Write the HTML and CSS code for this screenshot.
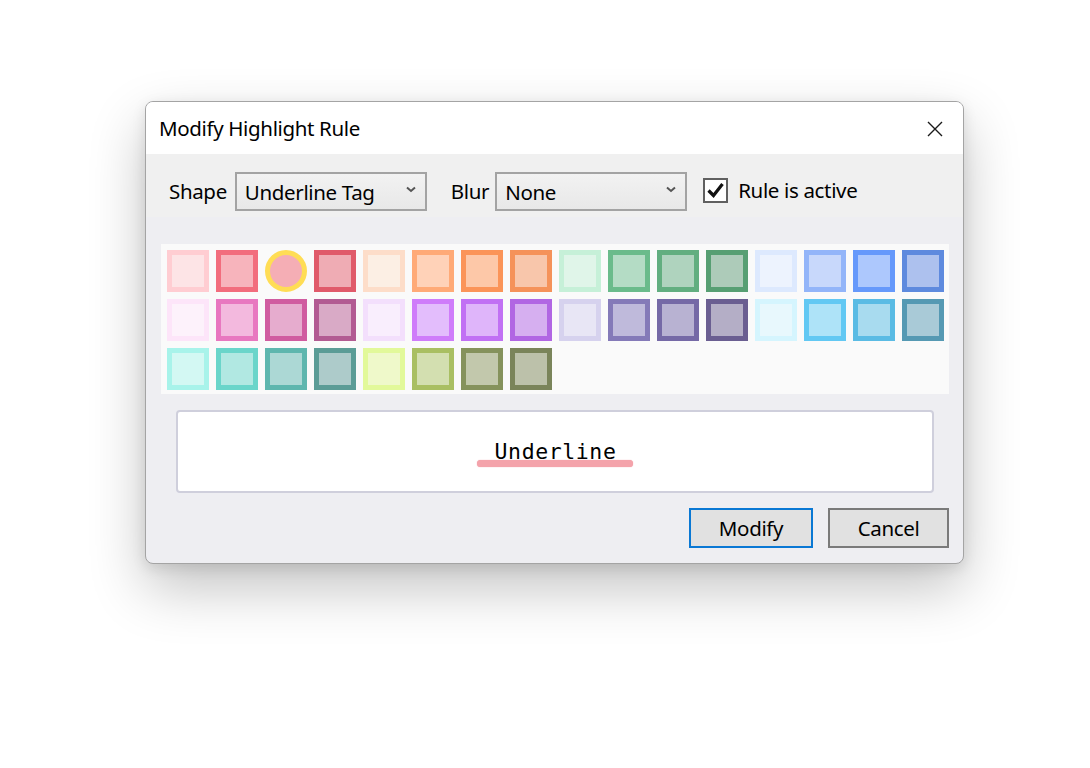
FILE: index.html
```html
<!DOCTYPE html>
<html>
<head>
<meta charset="utf-8">
<link rel="stylesheet" href="styles.css">
</head>
<body>
<div class="stage">
  <div class="dialog">
    <div class="titlebar">
      <span class="title">Modify Highlight Rule</span>
      <svg class="close" width="16" height="16" viewBox="0 0 16 16"><path d="M1 1L15 15M15 1L1 15" stroke="#1a1a1a" stroke-width="1.4" fill="none"/></svg>
    </div>
    <div class="controls">
      <span class="label">Shape</span>
      <div class="select">
        <span>Underline Tag</span>
        <svg class="chev" width="10" height="7" viewBox="0 0 10 7"><path d="M1 1.5L5 5L9 1.5" stroke="#555" stroke-width="2" fill="none"/></svg>
      </div>
      <span class="label blur">Blur</span>
      <div class="select">
        <span>None</span>
        <svg class="chev" width="10" height="7" viewBox="0 0 10 7"><path d="M1 1.5L5 5L9 1.5" stroke="#555" stroke-width="2" fill="none"/></svg>
      </div>
      <div class="check">
        <span class="box"><svg width="21" height="21" viewBox="0 0 21 21"><path d="M3.5 10.5L8.5 15.5L17.5 4" stroke="#111" stroke-width="3.2" fill="none"/></svg></span>
        <span class="label">Rule is active</span>
      </div>
    </div>
    <div class="content">
      <div class="palette">
        <span class="sw" style="--b:#ffcdd2;--f:#fde4e6"></span>
        <span class="sw" style="--b:#f26d7d;--f:#f7b4bc"></span>
        <span class="sw sel" style="--b:#ffdd55;--f:#f5aeb5"></span>
        <span class="sw" style="--b:#e05a6a;--f:#efacb4"></span>
        <span class="sw" style="--b:#fdddc9;--f:#fcefe4"></span>
        <span class="sw" style="--b:#ffaa77;--f:#ffd2b8"></span>
        <span class="sw" style="--b:#fb9458;--f:#fdc8a8"></span>
        <span class="sw" style="--b:#f5925a;--f:#f8c6ab"></span>
        <span class="sw" style="--b:#c6f0d8;--f:#e0f5e9"></span>
        <span class="sw" style="--b:#6abb8b;--f:#b4dcc5"></span>
        <span class="sw" style="--b:#62ae80;--f:#afd3be"></span>
        <span class="sw" style="--b:#579f73;--f:#adcbb9"></span>
        <span class="sw" style="--b:#dde9fe;--f:#edf3fe"></span>
        <span class="sw" style="--b:#93b5f9;--f:#c8d8fb"></span>
        <span class="sw" style="--b:#6699fb;--f:#adc8fd"></span>
        <span class="sw" style="--b:#5e8ade;--f:#adc1ee"></span>

        <span class="sw" style="--b:#fde5f9;--f:#fdf2fb"></span>
        <span class="sw" style="--b:#e878c0;--f:#f3b9de"></span>
        <span class="sw" style="--b:#d05ca0;--f:#e6acce"></span>
        <span class="sw" style="--b:#b25b92;--f:#d9aac6"></span>
        <span class="sw" style="--b:#f3dffc;--f:#f9eefd"></span>
        <span class="sw" style="--b:#cf7cfa;--f:#e3bdfc"></span>
        <span class="sw" style="--b:#c170f4;--f:#dfb5fa"></span>
        <span class="sw" style="--b:#b166e3;--f:#d6aff0"></span>
        <span class="sw" style="--b:#d6d2ee;--f:#e8e6f5"></span>
        <span class="sw" style="--b:#847ab8;--f:#bfbadb"></span>
        <span class="sw" style="--b:#7569a6;--f:#b8b2d2"></span>
        <span class="sw" style="--b:#6a5e91;--f:#b4aec6"></span>
        <span class="sw" style="--b:#d5f5fe;--f:#e8f8fd"></span>
        <span class="sw" style="--b:#62c8f3;--f:#aee3f8"></span>
        <span class="sw" style="--b:#5abbe4;--f:#a8dbef"></span>
        <span class="sw" style="--b:#5599b3;--f:#a9cad7"></span>

        <span class="sw" style="--b:#a8f3ea;--f:#d3f8f3"></span>
        <span class="sw" style="--b:#6ad5ca;--f:#b1e8e2"></span>
        <span class="sw" style="--b:#5eb6ae;--f:#acd8d5"></span>
        <span class="sw" style="--b:#5b9c96;--f:#adcbca"></span>
        <span class="sw" style="--b:#e2f99a;--f:#eff9ca"></span>
        <span class="sw" style="--b:#a9bf62;--f:#d3dfb0"></span>
        <span class="sw" style="--b:#85925c;--f:#c2c8ac"></span>
        <span class="sw" style="--b:#7a845a;--f:#bcc1aa"></span>
      </div>
      <div class="preview">
        <span class="tag">Underline</span>
      </div>
      <div class="buttons">
        <button class="btn primary">Modify</button>
        <button class="btn">Cancel</button>
      </div>
    </div>
  </div>
</div>
</body>
</html>
```

FILE: styles.css
```css
* { box-sizing: border-box; }
html, body { margin: 0; padding: 0; background: #ffffff; }
body {
  font-family: "Noto Sans", "Open Sans", sans-serif;
  color: #000;
}
.stage {
  padding: 101px 0 0 145px;
  height: 768px;
}
.dialog {
  width: 819px;
  border: 1px solid #a4a4a4;
  border-radius: 8px;
  background: #eeeef2;
  overflow: hidden;
  box-shadow: 0 24px 56px rgba(0,0,0,0.24), 0 4px 14px rgba(0,0,0,0.10);
}
.titlebar {
  height: 52px;
  background: #ffffff;
  display: flex;
  align-items: center;
  justify-content: space-between;
  padding: 0 20px 0 13px;
}
.title {
  font-size: 20.5px;
  letter-spacing: -0.35px;
}
.close { display: block; margin-top: 1px; }
.controls {
  height: 63px;
  background: #f0f0f0;
  display: flex;
  align-items: flex-start;
  padding: 18px 0 0 23px;
}
.label {
  font-size: 20.5px;
  letter-spacing: -0.35px;
  line-height: 39px;
  margin-right: 8px;
}
.label.blur { margin-left: 24px; margin-right: 6px; }
.select {
  width: 192px;
  height: 39px;
  border: 2px solid #a3a3a3;
  background: linear-gradient(#f2f2f2, #e8e8e8);
  display: flex;
  align-items: center;
  justify-content: space-between;
  padding: 0 9px 0 8px;
  font-size: 20.5px;
  letter-spacing: -0.35px;
}
.chev { display: block; margin-top: -5px; }
.check {
  display: flex;
  align-items: center;
  margin-left: 16px;
  height: 39px;
}
.box {
  width: 25px;
  height: 25px;
  border: 2px solid #606060;
  background: #fff;
  display: flex;
  align-items: center;
  justify-content: center;
  margin-right: 10px;
  margin-top: -3px;
}
.box svg { display: block; }
.check .label { margin-right: 0; margin-top: -3px; }
.content {
  padding: 27px 14px 15px 15px;
}
.palette {
  background: #fafafa;
  height: 150px;
  padding: 6px 5px 4px 6px;
  display: grid;
  grid-template-columns: repeat(16, 42px);
  grid-auto-rows: 42px;
  gap: 7px;
  align-content: start;
}
.sw {
  display: block;
  width: 42px;
  height: 42px;
  border: 5px solid var(--b);
  background: var(--f);
}
.sw.sel { border-radius: 50%; }
.preview {
  margin: 16px 15px 0 15px;
  height: 83px;
  background: #ffffff;
  border: 2px solid #cfcfdc;
  border-radius: 4px;
  display: flex;
  align-items: center;
  justify-content: center;
}
.tag {
  position: relative;
  font-family: "DejaVu Sans Mono", monospace;
  font-size: 21.5px;
  letter-spacing: 0.6px;
  padding: 0 17px 0 18px;
  line-height: 30px;
  margin-top: 0px;
}
.tag::after {
  content: "";
  position: absolute;
  left: 0;
  right: 0;
  bottom: 0px;
  height: 7px;
  border-radius: 4px;
  background: #f4a3ab;
  box-shadow: 0 0 1px #ef8f99;
}
.buttons {
  display: flex;
  justify-content: flex-end;
  gap: 15px;
  margin-top: 15px;
}
.btn {
  font-family: "Noto Sans", "Open Sans", sans-serif;
  font-size: 20.5px;
  letter-spacing: -0.35px;
  height: 40px;
  background: #e1e1e1;
  border: 2px solid #7a7a7a;
  color: #000;
  padding: 0;
  width: 121px;
}
.btn.primary {
  border-color: #0a78d4;
  width: 124px;
}
```
